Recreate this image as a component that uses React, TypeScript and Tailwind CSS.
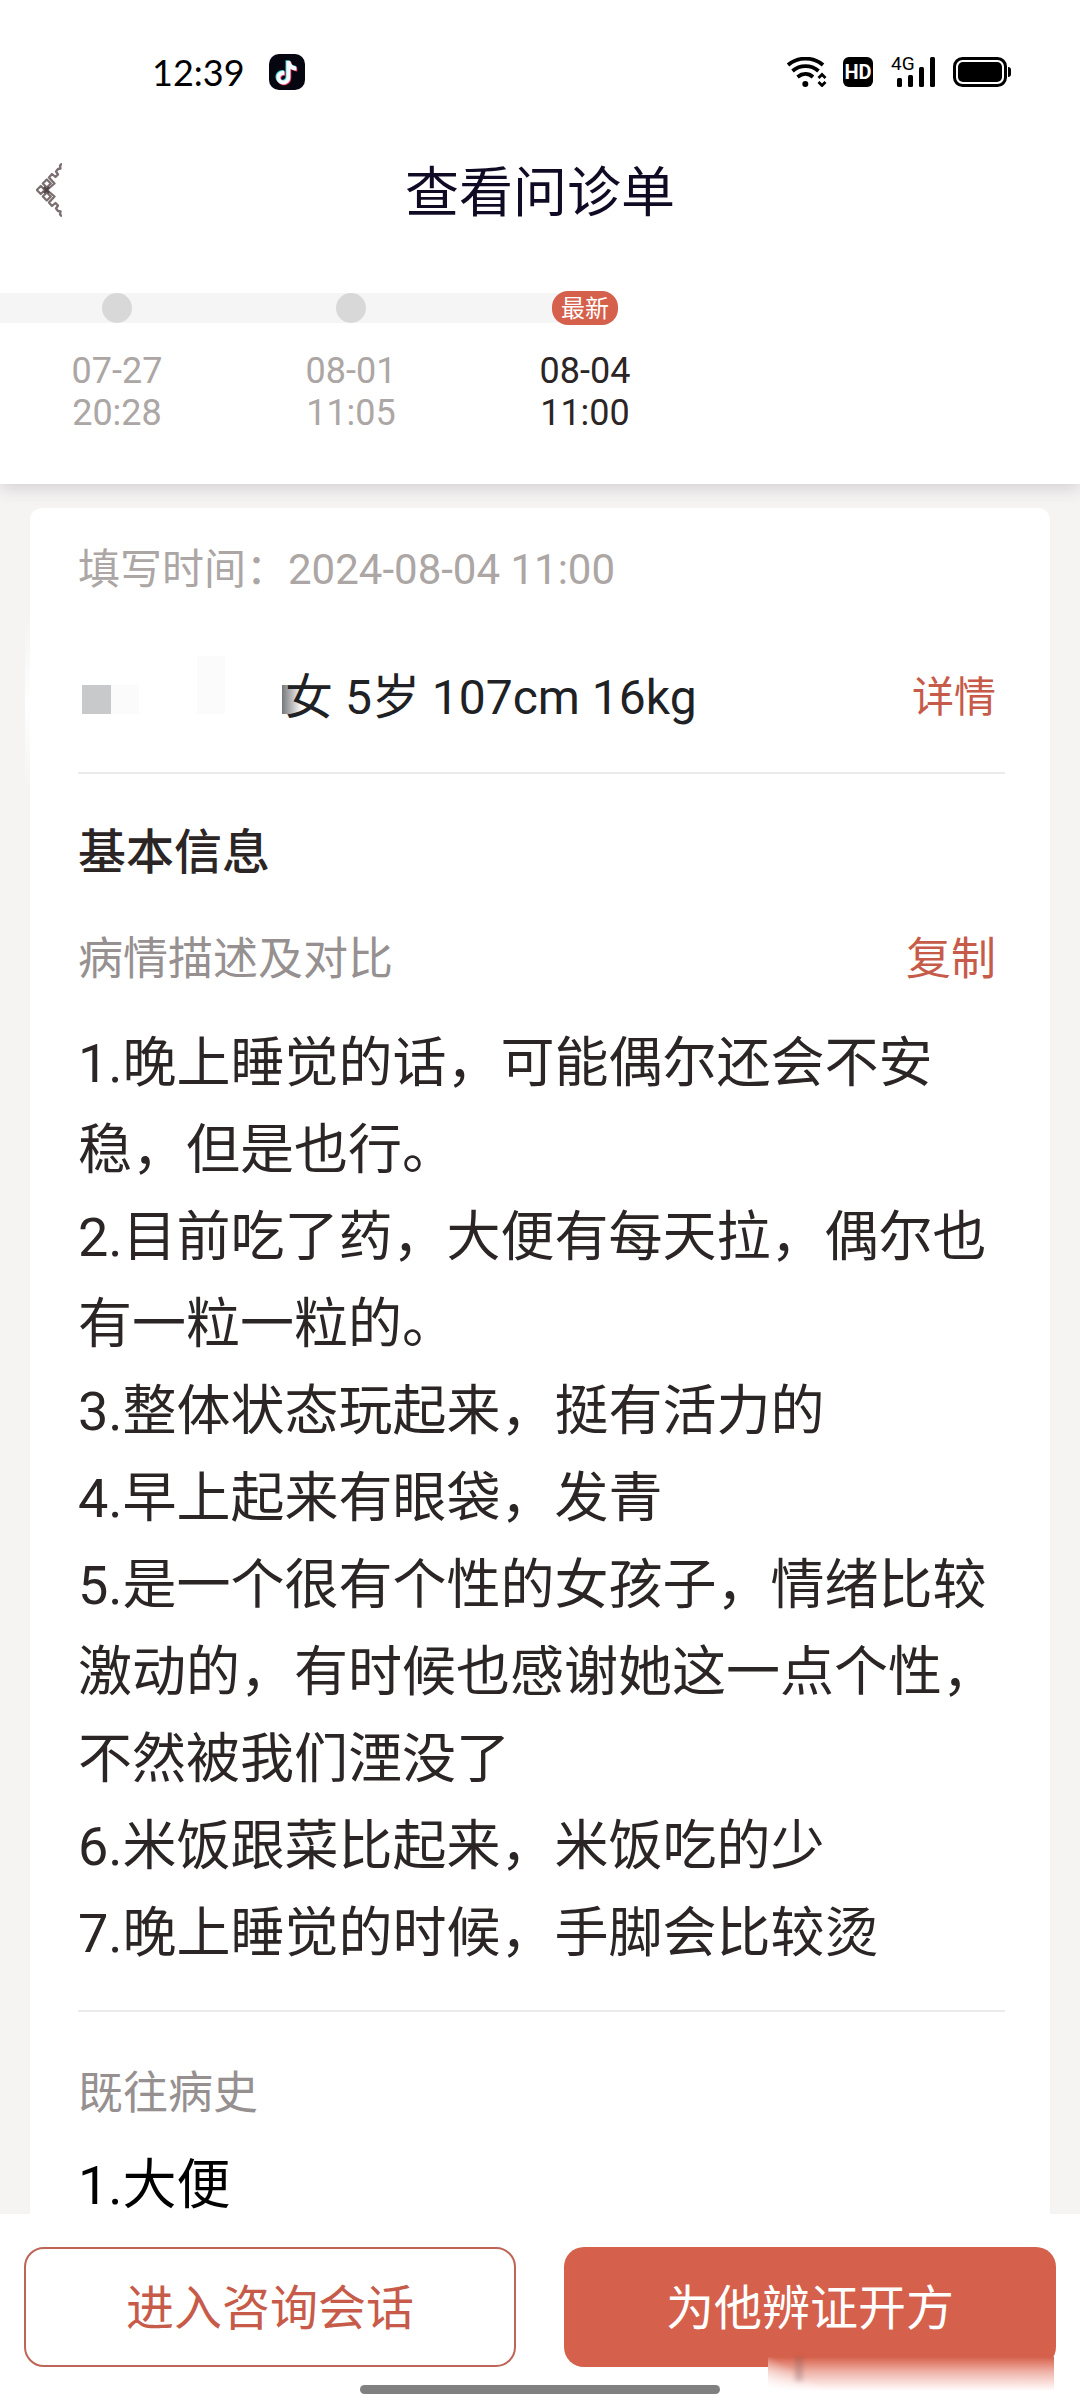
import { useState } from 'react';

const visits = [
  { date: '07-27', time: '20:28', latest: false },
  { date: '08-01', time: '11:05', latest: false },
  { date: '08-04', time: '11:00', latest: true },
];

const description = [
  '1.晚上睡觉的话，可能偶尔还会不安稳，但是也行。',
  '2.目前吃了药，大便有每天拉，偶尔也有一粒一粒的。',
  '3.整体状态玩起来，挺有活力的',
  '4.早上起来有眼袋，发青',
  '5.是一个很有个性的女孩子，情绪比较激动的，有时候也感谢她这一点个性，不然被我们湮没了',
  '6.米饭跟菜比起来，米饭吃的少',
  '7.晚上睡觉的时候，手脚会比较烫',
];

function MusicAppIcon() {
  const note = 'M17 7h4c.4 3.4 2.6 5.3 6 5.6v4c-2.300 0-4.400-.7-6-1.800v8.400c0 4.300-3.200 7.300-7.200 7.300S7 27.300 7 23.600c0-4.200 3.500-7.300 8-6.800v4.200c-2.300-.4-4 .8-4 2.700 0 1.600 1.200 2.800 2.800 2.800 2 0 3.200-1.300 3.200-3.400z';
  return (
    <svg viewBox="0 0 36 36" className="size-9" aria-hidden="true">
      <rect width="36" height="36" rx="10" fill="#05060f" />
      <path d={note} fill="#35d6d6" transform="translate(-0.500 -0.800)" />
      <path d={note} fill="#e8365c" transform="translate(1.300 0.800)" />
      <path d={note} fill="#f4fbfc" transform="translate(0.400 0)" />
    </svg>
  );
}

function WifiIcon() {
  return (
    <svg viewBox="0 0 40 30" className="h-[30px] w-10" fill="none" stroke="#000" strokeWidth="3.800" aria-hidden="true">
      <path d="M1 8C11 -0.500 26 -0.500 36 8" />
      <path d="M5.500 14C13 7.500 24 7.500 31.500 14" />
      <path d="M10.500 20C15.500 16 21.500 16 26 20" />
      <circle cx="18.300" cy="27" r="3" fill="#000" stroke="none" />
      <path d="M31.500 21l3.500-3.500 3.500 3.500M31.500 25l3.500 3.500 3.500-3.500" strokeWidth="2.800" />
    </svg>
  );
}

function SignalIcon() {
  return (
    <svg viewBox="0 0 38 30" className="h-[30px] w-[38px]" aria-hidden="true">
      <rect x="0" y="21" width="5" height="9" rx="1.500" />
      <rect x="11" y="18" width="5" height="12" rx="1.500" />
      <rect x="22" y="10" width="5" height="20" rx="1.500" />
      <rect x="33" y="0" width="5" height="30" rx="1.500" />
    </svg>
  );
}

function BatteryIcon() {
  return (
    <svg viewBox="0 0 58 30" className="h-[30px] w-[58px]" aria-hidden="true">
      <rect x="1.500" y="1.500" width="51" height="27" rx="8" fill="none" stroke="#000" strokeWidth="3" />
      <rect x="5" y="5" width="44" height="20" rx="5" />
      <path d="M55 10c2 0 3 1 3 3v4c0 2-1 3-3 3z" />
    </svg>
  );
}

function BackIcon() {
  return (
    <svg viewBox="0 0 26 54" className="h-[54px] w-[26px]" fill="none" stroke="#7a6e70" strokeWidth="2.300" strokeLinejoin="round" aria-hidden="true">
      <path d="M0.800 27l4-4 4 4-4 4z" />
      <path d="M6.800 20.500l4-4 4 4-4 4zM6.800 33.500l4-4 4 4-4 4z" />
      <path d="M11 27l7.500-6.500-5.500-6 3-3.500 3.500 3 2.500-2.500-2-3 2-2.500 2.500-.5-.5-3 2-2" />
      <path d="M11 27l7.500 6.500-5.500 6 3 3.500 3.500-3 2.500 2.500-2 3 2 2.500 2.500.5-.5 3 2 2" />
      <path d="M8 24l5 6M8 30l5-6" stroke="#4f4345" />
    </svg>
  );
}

function StatusBar() {
  return (
    <div className="flex h-[120px] items-center justify-between pt-6 pr-[69px] pl-[152px]">
      <div className="flex items-center gap-6">
        <span className="font-['Lato',sans-serif] text-[36px] leading-[42px] text-black">12:39</span>
        <MusicAppIcon />
      </div>
      <div className="flex items-center">
        <WifiIcon />
        <span className="ml-4 flex size-[30px] items-center justify-center rounded-md bg-black text-[20px] leading-none font-bold text-white">
          HD
        </span>
        <div className="relative ml-6">
          <span className="absolute -top-px -left-[6px] text-[19px] leading-4 text-black">4G</span>
          <SignalIcon />
        </div>
        <div className="ml-[18px]">
          <BatteryIcon />
        </div>
      </div>
    </div>
  );
}

function Timeline() {
  return (
    <ol className="flex pt-[29px] pb-[50px]">
      {visits.map((visit) => (
        <li key={visit.date} className="flex w-[234px] flex-col items-center">
          <div
            className={`mb-[27px] flex h-[30px] w-full items-center justify-center ${
              visit.latest ? 'bg-[linear-gradient(to_right,#f5f5f5_50%,transparent_50%)]' : 'bg-[#f5f5f5]'
            }`}
          >
            {visit.latest ? (
              <span className="flex h-[34px] w-[66px] shrink-0 items-center justify-center rounded-2xl bg-[#d5604b] pt-0.5 text-[24px] leading-none text-white">
                最新
              </span>
            ) : (
              <span className="size-[30px] rounded-full bg-[#d8d8d8]" />
            )}
          </div>
          <time className={`text-center text-[36px] leading-[42px] ${visit.latest ? 'text-[#2b2525]' : 'text-[#aca6a5]'}`}>
            {visit.date}
            <br />
            {visit.time}
          </time>
        </li>
      ))}
    </ol>
  );
}

// Masked patient name, the last block fades out under the text
function MaskedName() {
  return (
    <svg viewBox="0 0 207 60" className="h-[60px] w-[207px] shrink-0 overflow-visible" role="img" aria-label="姓名已隐藏">
      <defs>
        <linearGradient id="mask-fade">
          <stop offset="0" stopColor="#77787b" />
          <stop offset="1" stopColor="#fff" />
        </linearGradient>
      </defs>
      <rect x="4" y="17" width="29" height="29" fill="#c8c9cb" />
      <rect x="33" y="17" width="28" height="29" fill="#fbfbfb" />
      <rect x="119" y="-12" width="28" height="58" fill="#fbfbfb" />
      <rect x="204" y="17" width="20" height="29" fill="url(#mask-fade)" />
    </svg>
  );
}

export default function App() {
  const [, setCopied] = useState(false);

  const handleCopy = () => {
    navigator.clipboard?.writeText(description.join('\n'));
    setCopied(true);
  };

  return (
    <div className="flex h-screen flex-col bg-[#f5f4f3] font-['Roboto','Noto_Sans_CJK_SC',sans-serif]" lang="zh-CN">
      <header className="relative shrink-0 bg-white shadow-[0_4px_16px_rgba(60,40,60,0.18)]">
        <StatusBar />
        <nav className="grid h-36 grid-cols-[1fr_auto_1fr] items-center px-9">
          <button type="button" aria-label="返回" className="justify-self-start pb-1">
            <BackIcon />
          </button>
          <h1 className="pt-1 text-[54px] leading-[72px] text-[#110a24]">查看问诊单</h1>
        </nav>
        <Timeline />
      </header>

      <main className="min-h-0 flex-1 overflow-hidden px-[30px] pt-6">
        <article className="relative min-h-full rounded-t-xl bg-white pt-8 pr-[45px] pl-12">
          <div className="absolute top-[110px] -left-[5px] h-[170px] w-[10px] bg-linear-to-b from-transparent via-white to-transparent" />
          <p className="text-[42px] leading-[60px] text-[#aca6a5]">填写时间：2024-08-04 11:00</p>

          <div className="flex items-center border-b-2 border-[#ebebeb] pt-[68px] pr-[9px] pb-11">
            <MaskedName />
            <p className="flex-1 text-[48px] leading-[60px] text-[#202124]">女 5岁 107cm 16kg</p>
            <button type="button" className="text-[42px] leading-[60px] text-[#c75b4a]">
              详情
            </button>
          </div>

          <section>
            <h2 className="mt-[43px] text-[48px] leading-[72px] font-medium text-[#2b2525]">基本信息</h2>
            <div className="mt-[35px] flex items-center justify-between pr-[9px]">
              <h3 className="text-[45px] leading-[72px] text-[#969090]">病情描述及对比</h3>
              <button type="button" onClick={handleCopy} className="text-[45px] leading-[72px] text-[#c75b4a]">
                复制
              </button>
            </div>
            <div className="mt-6 border-b-2 border-[#ebebeb] pb-[33px] text-[54px] leading-[87px] text-[#2b2525]">
              {description.map((line) => (
                <p key={line}>{line}</p>
              ))}
            </div>
          </section>

          <section>
            <h3 className="mt-[46px] text-[45px] leading-[72px] text-[#969090]">既往病史</h3>
            <p className="mt-[29px] text-[54px] leading-[54px] text-black">1.大便</p>
          </section>
        </article>
      </main>

      <footer className="shrink-0 bg-white px-6 pt-[33px] pb-[6px]">
        <div className="grid grid-cols-2 gap-12">
          <button
            type="button"
            className="h-[120px] rounded-[20px] border-2 border-[#bd6557] pt-1 text-[48px] leading-[72px] text-[#c75b4a]"
          >
            进入咨询会话
          </button>
          <div className="relative">
            <button type="button" className="h-[120px] w-full rounded-[20px] bg-[#d5604b] pt-1 text-[48px] leading-[72px] text-white">
              为他辨证开方
            </button>
            <div className="absolute right-0.5 -bottom-6 h-[34px] w-[286px] bg-linear-to-b from-[#d5604b] via-[#f0b5ab] via-45% to-white">
              <div className="h-full w-14 bg-[linear-gradient(to_bottom_left,transparent_45%,#fff)]" />
              <div className="absolute top-0 left-[27px] h-6 w-2 bg-[#7d5a60]/30 blur-[2px]" />
            </div>
          </div>
        </div>
        <div className="mx-auto mt-[18px] h-[9px] w-[360px] rounded-full bg-[#808080]" />
      </footer>
    </div>
  );
}
